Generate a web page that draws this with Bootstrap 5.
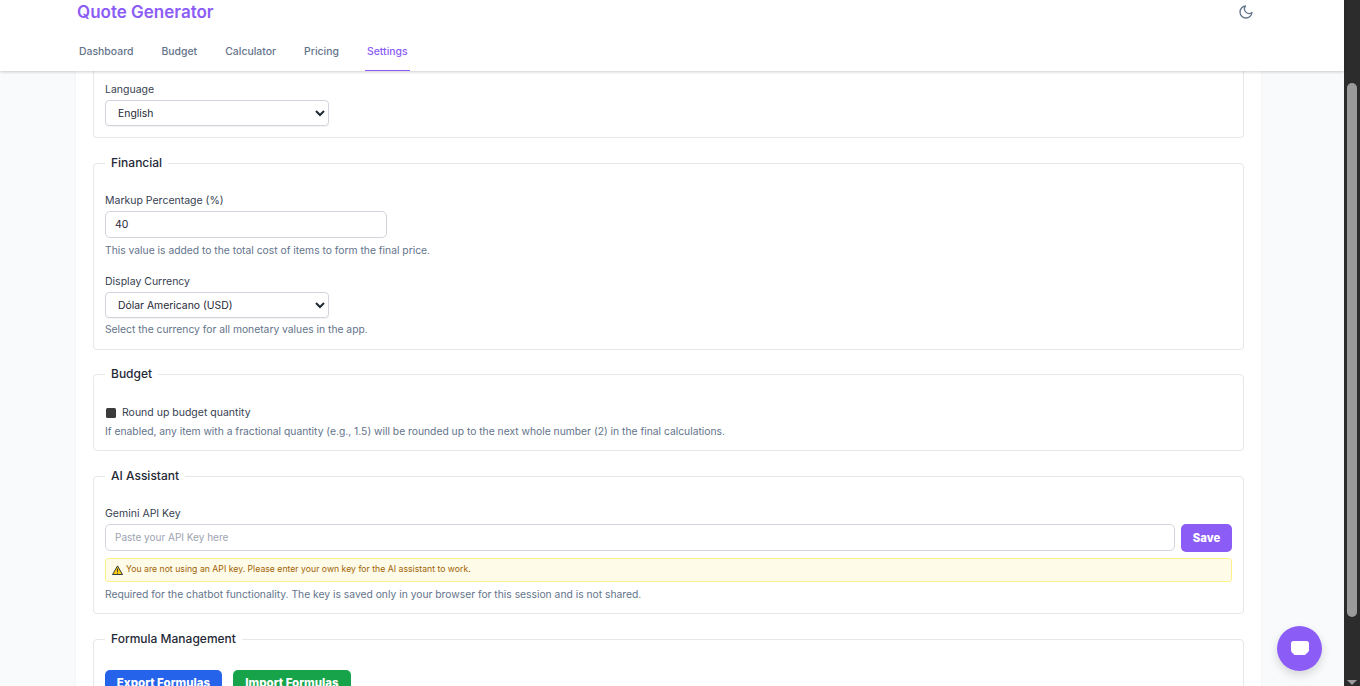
<!DOCTYPE html>
<html lang="en">
<head>
<meta charset="utf-8">
<title>Quote Generator</title>
<link rel="stylesheet" href="https://cdn.jsdelivr.net/npm/bootstrap@5.3.0/dist/css/bootstrap.min.css">
<style>
html,body{height:100%;overflow:hidden}
body{font-family:Inter,"Liberation Sans",sans-serif;font-size:10.5px;background:#f9fafb;color:#1f2937}
.app-main{width:1344px}
.top-head{height:71px;background:#fff;box-shadow:0 1px 3px rgba(0,0,0,.2);z-index:5;padding:0 90px 0 77px}
.brand-name{font-size:17px;font-weight:600;color:#8b5cf6;line-height:22px}
.head-row{height:23px}
.tab-row{gap:24px;margin-top:19px}
.tab-link{font-size:10.45px;font-weight:500;color:#64748b;padding:0 2px;height:29px;line-height:20px;border-bottom:1px solid transparent;text-decoration:none}
.tab-link.on{color:#8b5cf6;border-bottom-color:#8b5cf6}
.sheet{width:1185px;margin-left:76px;background:#fff;padding:0 17px;height:615px;overflow:hidden;box-shadow:0 0 2px rgba(0,0,0,.06)}
.set-group{border:1px solid #e5e7eb;border-radius:4px;padding:0 11px 11px;margin-top:15px;min-width:0}
.set-group.first{border-top:0;border-top-left-radius:0;border-top-right-radius:0;margin-top:0;padding-top:12px}
.set-group.tight{margin-top:14px}
.set-legend{float:none;width:auto;font-size:12px;font-weight:500;line-height:20px;padding:0 6px;margin:0;color:#1f2937}
.block-a{margin-top:21px}
.block-c{margin-top:22px}
.field-label{display:block;font-size:10.5px;font-weight:400;color:#374151;line-height:13px;margin-bottom:4px}
.hint{font-size:10.3px;color:#64748b;line-height:13px;margin:0 0 1px}
.hint-gap{margin-top:6px}
.hint-near{margin-top:5px;margin-bottom:2px}
.block-b{margin-bottom:18px}
.pick{appearance:auto;background-image:none;width:224px;height:26px;font-size:10.4px;padding:0 8px;border:1px solid #d1d5db;border-radius:4px;color:#1f2937;box-shadow:0 1px 1px rgba(0,0,0,.05)}
.entry{height:27px;font-size:10.5px;padding:0 9px;border:1px solid #d1d5db;border-radius:5px;color:#1f2937}
.entry::placeholder{color:#9ca3af;font-size:10px}
.entry.short{width:282px}
.tick{appearance:none;width:10px;height:10px;margin:0 6px 0 1px;background:#3b3b3b;border-radius:1.5px;flex:none}
.key-row{gap:6px}
.btn-save{height:28px;width:51px;background:#8b5cf6;color:#fff;font-size:11.3px;font-weight:800;border:0;border-radius:5px;padding:0}
.notice{height:24px;background:#fefce8;border:1px solid #fef08a;border-radius:3px;color:#a16207;font-size:8.7px;padding:0 6px;margin:6px 0;gap:3px}
.act-row{gap:11px}
.act{height:28px;width:117px;border:0;border-radius:5px;color:#fff;font-size:11.5px;font-weight:800;padding:0}
.act.blue{background:#2563eb}
.act.green{background:#16a34a;width:118px}
.rail{width:16px;background:#2c2c2c;position:relative;flex:none}
.rail-thumb{position:absolute;left:3px;top:83px;width:10px;height:534px;background:#9b9b9b;border-radius:5px}
.rail-arrow{position:absolute;left:3px;bottom:1px;width:0;height:0;border-left:5px solid transparent;border-right:5px solid transparent;border-top:5px solid #9b9b9b}
.chat-fab{position:fixed;left:1277px;top:626px;width:45px;height:45px;border-radius:50%;background:#8b5cf6;border:0;padding:0 0 2px;box-shadow:0 4px 10px rgba(0,0,0,.15);z-index:9}
</style>
</head>
<body>
<div class="d-flex vh-100 overflow-hidden">
  <div class="app-main d-flex flex-column">
    <header class="top-head position-relative flex-shrink-0">
      <div class="head-row d-flex justify-content-between align-items-center">
        <div class="brand-name">Quote Generator</div>
        <svg width="16" height="16" viewBox="0 0 24 24" fill="none" stroke="#64748b" stroke-width="2" stroke-linecap="round" stroke-linejoin="round"><path d="M21 12.8A9 9 0 1 1 11.2 3a7 7 0 0 0 9.8 9.8z"/></svg>
      </div>
      <nav class="tab-row d-flex">
        <a class="tab-link" href="#">Dashboard</a>
        <a class="tab-link" href="#">Budget</a>
        <a class="tab-link" href="#">Calculator</a>
        <a class="tab-link" href="#">Pricing</a>
        <a class="tab-link on" href="#">Settings</a>
      </nav>
    </header>
    <main class="sheet">
      <fieldset class="set-group first">
        <label class="field-label">Language</label>
        <select class="form-select pick"><option>English</option></select>
      </fieldset>
      <fieldset class="set-group">
        <legend class="set-legend">Financial</legend>
        <div class="block-a block-b">
          <label class="field-label">Markup Percentage (%)</label>
          <input class="form-control entry short" type="text" value="40">
          <p class="hint hint-gap">This value is added to the total cost of items to form the final price.</p>
        </div>
        <label class="field-label">Display Currency</label>
        <select class="form-select pick"><option>Dólar Americano (USD)</option></select>
        <p class="hint hint-near">Select the currency for all monetary values in the app.</p>
      </fieldset>
      <fieldset class="set-group tight">
        <legend class="set-legend">Budget</legend>
        <div class="d-flex align-items-center block-c">
          <input class="tick" type="checkbox" aria-label="Round up budget quantity">
          <span class="field-label mb-0">Round up budget quantity</span>
        </div>
        <p class="hint hint-gap">If enabled, any item with a fractional quantity (e.g., 1.5) will be rounded up to the next whole number (2) in the final calculations.</p>
      </fieldset>
      <fieldset class="set-group">
        <legend class="set-legend">AI Assistant</legend>
        <div class="block-a">
          <label class="field-label">Gemini API Key</label>
          <div class="d-flex key-row">
            <input class="form-control entry" type="text" placeholder="Paste your API Key here">
            <button class="btn-save flex-shrink-0" type="button">Save</button>
          </div>
          <div class="notice d-flex align-items-center">
            <svg width="11" height="10" viewBox="0 0 24 22"><path d="M12 2 L23 21 H1 Z" fill="#facc15" stroke="#1f2937" stroke-width="2" stroke-linejoin="round"/><path d="M12 8v7M12 17v2" stroke="#1f2937" stroke-width="2"/></svg>
            <span>You are not using an API key. Please enter your own key for the AI assistant to work.</span>
          </div>
          <p class="hint">Required for the chatbot functionality. The key is saved only in your browser for this session and is not shared.</p>
        </div>
      </fieldset>
      <fieldset class="set-group">
        <legend class="set-legend">Formula Management</legend>
        <div class="d-flex act-row block-a">
          <button class="act blue" type="button">Export Formulas</button>
          <button class="act green" type="button">Import Formulas</button>
        </div>
      </fieldset>
    </main>
  </div>
  <div class="rail"><div class="rail-thumb"></div><div class="rail-arrow"></div></div>
</div>
<button class="chat-fab d-flex align-items-center justify-content-center" type="button" aria-label="Open chat">
  <svg width="18" height="14" viewBox="0 0 18 14"><path d="M2.5 0h13A2.5 2.5 0 0 1 18 2.5V9q0 2-2 3l-2 2H3.5L2 12.5Q0 11.5 0 9V2.5A2.5 2.5 0 0 1 2.5 0z" fill="#fff"/></svg>
</button>
<script src="https://cdn.jsdelivr.net/npm/bootstrap@5.3.0/dist/js/bootstrap.bundle.min.js"></script>
</body>
</html>
